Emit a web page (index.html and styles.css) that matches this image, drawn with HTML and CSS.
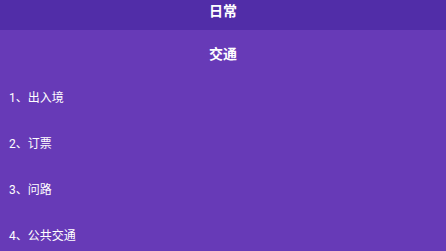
FILE: index.html
```html
<!DOCTYPE html>
<html lang="zh-CN">
<head>
<meta charset="utf-8">
<link rel="stylesheet" href="styles.css">
</head>
<body>
<header class="topbar">日常</header>
<main class="content">
  <h1 class="section-title">交通</h1>
  <ul class="list">
    <li class="item">1、出入境</li>
    <li class="item">2、订票</li>
    <li class="item">3、问路</li>
    <li class="item">4、公共交通</li>
  </ul>
</main>
</body>
</html>
```
FILE: styles.css
```css
html, body {
  margin: 0;
  padding: 0;
  height: 100%;
  overflow: hidden;
}
body {
  background: #673ab7;
  color: #ffffff;
  font-family: "Roboto", "Noto Sans CJK SC", sans-serif;
}
.topbar {
  background: #512da8;
  height: 30px;
  line-height: 23px;
  text-align: center;
  font-size: 14px;
  font-weight: bold;
}
.content {
  display: flex;
  flex-direction: column;
}
.section-title {
  margin: 0;
  padding: 14px 0 11px;
  line-height: 20px;
  font-size: 14px;
  font-weight: bold;
  text-align: center;
}
.list {
  list-style: none;
  margin: 0;
  padding: 0;
}
.item {
  height: 46px;
  line-height: 46px;
  padding-left: 9px;
  font-size: 12px;
}
```
